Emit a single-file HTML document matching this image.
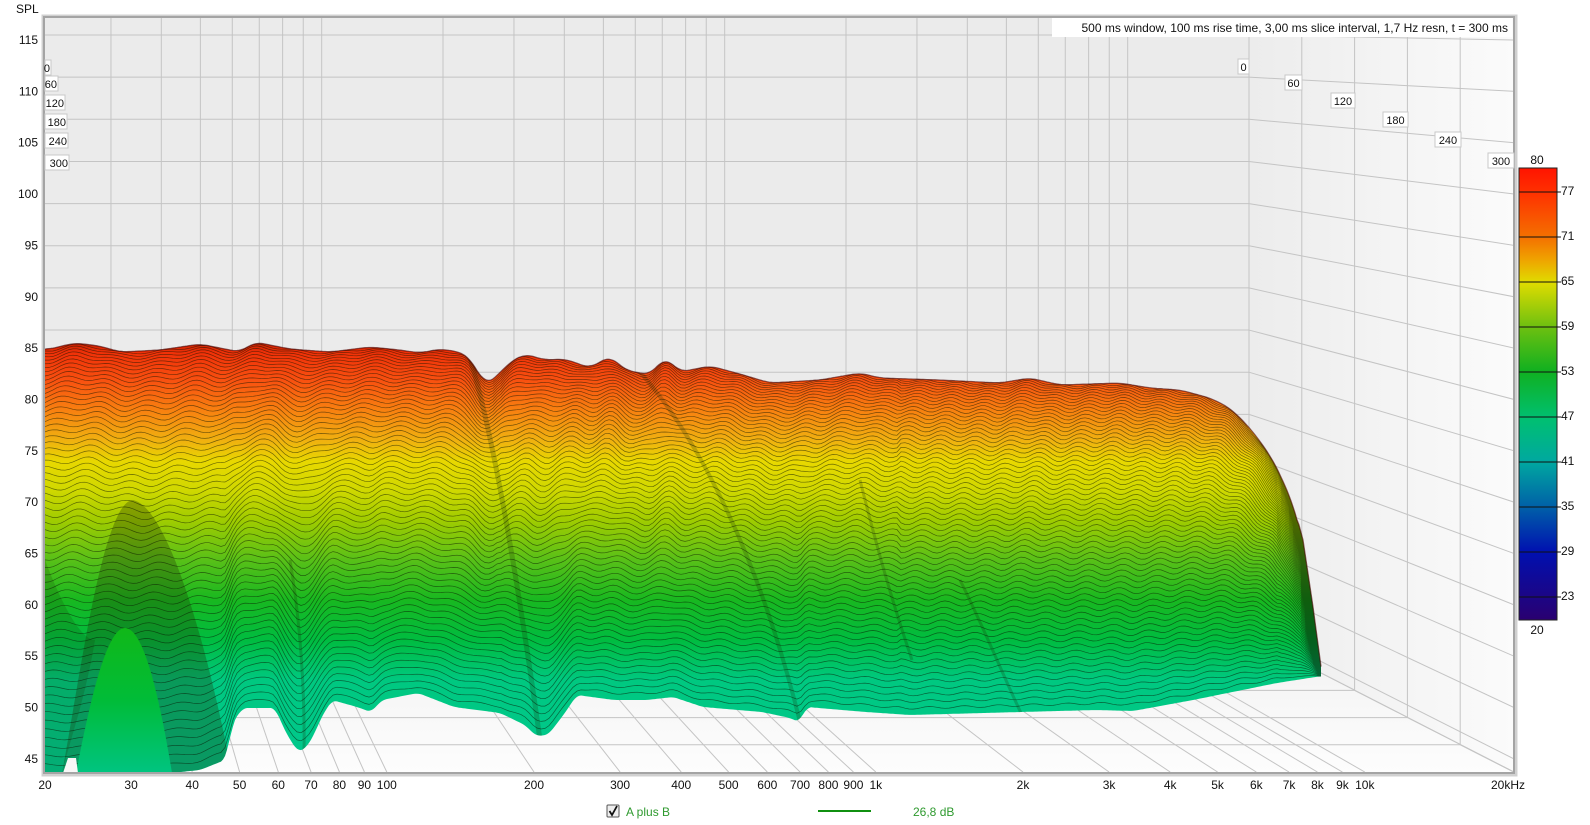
<!DOCTYPE html>
<html><head><meta charset="utf-8"><style>
html,body{margin:0;padding:0;background:#fff;width:1590px;height:825px;overflow:hidden}
svg{display:block}
text{font-family:"Liberation Sans",sans-serif;font-size:12px;fill:#111}
</style></head><body>
<svg id="s" width="1590" height="825" viewBox="0 0 1590 825" xmlns="http://www.w3.org/2000/svg">
<defs>
<linearGradient id="wall" x1="0" x2="1" y1="0" y2="0"><stop offset="0" stop-color="#ececec"/><stop offset="1" stop-color="#fbfbfb"/></linearGradient>
<linearGradient id="floor" x1="0" x2="0" y1="0" y2="1"><stop offset="0" stop-color="#f1f1f1"/><stop offset="1" stop-color="#fdfdfd"/></linearGradient>
<linearGradient id="surf" gradientUnits="userSpaceOnUse" x1="0" y1="340" x2="0" y2="775">
<stop offset="0" stop-color="#b81c00"/>
<stop offset="0.028" stop-color="#f03008"/>
<stop offset="0.092" stop-color="#f85010"/>
<stop offset="0.161" stop-color="#f88010"/>
<stop offset="0.23" stop-color="#f0b010"/>
<stop offset="0.28" stop-color="#e8d800"/>
<stop offset="0.345" stop-color="#d0d800"/>
<stop offset="0.414" stop-color="#a0cc00"/>
<stop offset="0.506" stop-color="#58c018"/>
<stop offset="0.598" stop-color="#18b820"/>
<stop offset="0.69" stop-color="#00bc40"/>
<stop offset="0.782" stop-color="#00c880"/>
<stop offset="1" stop-color="#00c890"/>
</linearGradient>
<linearGradient id="bell" x1="0" x2="0" y1="0" y2="1"><stop offset="0" stop-color="#10b818"/><stop offset="0.5" stop-color="#00bc38"/><stop offset="1" stop-color="#00c480"/></linearGradient>
<linearGradient id="cbar" x1="0" x2="0" y1="0" y2="1">
<stop offset="0" stop-color="#ff1400"/>
<stop offset="0.053" stop-color="#ff3000"/>
<stop offset="0.153" stop-color="#f47000"/>
<stop offset="0.2" stop-color="#f0a000"/>
<stop offset="0.253" stop-color="#e0dc00"/>
<stop offset="0.353" stop-color="#6cc010"/>
<stop offset="0.45" stop-color="#10b020"/>
<stop offset="0.553" stop-color="#00c070"/>
<stop offset="0.65" stop-color="#00a8a0"/>
<stop offset="0.75" stop-color="#0060a8"/>
<stop offset="0.85" stop-color="#0010b0"/>
<stop offset="1" stop-color="#2a0070"/>
</linearGradient>
<clipPath id="plot"><rect x="45" y="18" width="1468" height="754"/></clipPath>
</defs>
<rect x="0" y="0" width="1590" height="825" fill="#fff"/>
<rect x="43" y="16" width="1473" height="759" fill="none" stroke="#d0d0d0" stroke-width="3"/>
<g clip-path="url(#plot)">
<rect x="44" y="17" width="1470" height="756" fill="#ebebeb"/>
<polygon points="1249,17 1514,17 1514,772 1249,636" fill="url(#wall)"/>
<polygon points="44,636 1249,636 1514,772 44,772" fill="url(#floor)"/>
<g id="grid" stroke="#c4c4c4" stroke-width="1" fill="none"></g>
<g id="surfg"></g>
</g>
<rect x="44" y="17" width="1470" height="756" fill="none" stroke="#a4a4a4" stroke-width="2"/>
<rect x="1052" y="18" width="460" height="19" fill="#fff"/>
<text x="1508" y="32" text-anchor="end">500 ms window, 100 ms rise time, 3,00 ms slice interval, 1,7 Hz resn, t = 300 ms</text>
<text x="16" y="13">SPL</text>
<g id="ylab"></g>
<g id="xlab"></g>
<g id="tlab"></g>
<rect x="1519" y="168" width="38" height="452" fill="url(#cbar)" stroke="#222" stroke-width="1"/>
<g id="cb"></g>
<text x="1537" y="164" text-anchor="middle">80</text>
<text x="1537" y="634" text-anchor="middle">20</text>
<rect x="607" y="805" width="12" height="12" fill="#eee" stroke="#555" rx="1"/>
<path d="M609.5 811 L612 815 L617 806" stroke="#111" stroke-width="1.8" fill="none"/>
<text x="626" y="816" style="fill:#2f9a2f">A plus B</text>
<line x1="818" y1="811" x2="871" y2="811" stroke="#109010" stroke-width="2"/>
<text x="913" y="816" style="fill:#2f9a2f">26,8 dB</text>
</svg>
<script>
var NS="http://www.w3.org/2000/svg";
function el(p,n,a,t){var e=document.createElementNS(NS,n);for(var k in a)e.setAttribute(k,a[k]);if(t!=null)e.textContent=t;p.appendChild(e);return e;}
var L=Math.log10;
function xb(f){return 40+403*L(f/20);}
function xf(f){return 45+489*L(f/20);}
function ybk(d){return 35+(115-d)*8.43;}
function yfr(d){return 40+(115-d)*10.27;}
var grid=document.getElementById('grid');
var freqs=[30,40,50,60,70,80,90,100,200,300,400,500,600,700,800,900,1000,2000,3000,4000,5000,6000,7000,8000,9000,10000];
freqs.forEach(function(f){var x=xb(f);el(grid,'line',{x1:x,y1:17,x2:x,y2:636});el(grid,'line',{x1:x,y1:636,x2:xf(f),y2:772});});
el(grid,'line',{x1:1249,y1:17,x2:1249,y2:636});
for(var d=115;d>=45;d-=5){var y=ybk(d);el(grid,'line',{x1:44,y1:y,x2:1249,y2:y});el(grid,'line',{x1:1249,y1:y,x2:1514,y2:yfr(d)});}
el(grid,'line',{x1:44,y1:636,x2:1249,y2:636});
[1,2,3,4].forEach(function(k){var t=k/5;var x=1249+t*264,y=636+t*136;el(grid,'line',{x1:x,y1:17,x2:x,y2:y});el(grid,'line',{x1:44,y1:y,x2:x,y2:y});el(grid,'line',{x1:x,y1:y,x2:x+53,y2:y+27});});
el(grid,'line',{x1:1249,y1:636,x2:1514,y2:772});
var yl=document.getElementById('ylab');
for(var d=115;d>=45;d-=5){el(yl,'text',{x:38,y:yfr(d)+4,'text-anchor':'end'},d);}
var xl=document.getElementById('xlab');
[[20,'20'],[30,'30'],[40,'40'],[50,'50'],[60,'60'],[70,'70'],[80,'80'],[90,'90'],[100,'100'],[200,'200'],[300,'300'],[400,'400'],[500,'500'],[600,'600'],[700,'700'],[800,'800'],[900,'900'],[1000,'1k'],[2000,'2k'],[3000,'3k'],[4000,'4k'],[5000,'5k'],[6000,'6k'],[7000,'7k'],[8000,'8k'],[9000,'9k'],[10000,'10k']].forEach(function(a){el(xl,'text',{x:xf(a[0]),y:789,'text-anchor':'middle'},a[1]);});
el(xl,'text',{x:1491,y:789},'20kHz');
var tl=document.getElementById('tlab');
[[1238,59,11,'0'],[1285,75,17,'60'],[1331,93,24,'120'],[1383,112,25,'180'],[1435,132,26,'240'],[1488,153,26,'300']].forEach(function(a){el(tl,'rect',{x:a[0],y:a[1],width:a[2],height:15,fill:'#fff',stroke:'#c8c8c8'});el(tl,'text',{x:a[0]+a[2]/2,y:a[1]+12,'text-anchor':'middle','style':'font-size:11px'},a[3]);});
[[45,60,6,'0'],[45,76,13,'60'],[45,95,20,'120'],[45,114,22,'180'],[45,133,23,'240'],[45,155,24,'300']].forEach(function(a){el(tl,'rect',{x:a[0],y:a[1],width:a[2],height:15,fill:'#fff',stroke:'#c8c8c8'});el(tl,'text',{x:a[0]+a[2]-1,y:a[1]+12,'text-anchor':'end','style':'font-size:11px'},a[3]);});
var cb=document.getElementById('cb');
[[192,77],[237,71],[282,65],[327,59],[372,53],[417,47],[462,41],[507,35],[552,29],[597,23]].forEach(function(a){el(cb,'line',{x1:1519,y1:a[0],x2:1561,y2:a[0],stroke:'#111'});el(cb,'text',{x:1561,y:a[0]+3},a[1]);});
var T=[[45,350],[75,343],[100,346],[120,352],[160,350],[200,344],[240,352],[255,342],[290,349],[330,352],[370,347],[400,350],[420,353],[440,349],[460,352],[470,358],[478,372],[485,385],[495,378],[510,362],[525,354],[545,360],[565,359],[590,368],[610,356],[625,370],[650,375],[665,357],[680,372],[710,366],[740,374],[770,383],[820,380],[860,373],[880,378],[940,380],[1000,383],[1030,378],[1060,385],[1120,383],[1150,388],[1180,390],[1210,398],[1230,408],[1250,428],[1270,455],[1282,478],[1295,510],[1303,540],[1313,607],[1322,674]];
var B=[[45,773],[171,773],[200,770],[225,760],[229,745],[232,723],[243,708],[275,708],[286,733],[298,752],[306,748],[314,735],[321,718],[332,700],[357,707],[371,712],[382,700],[418,693],[454,707],[500,713],[525,725],[536,736],[548,735],[562,717],[577,695],[614,700],[647,700],[673,697],[703,707],[762,712],[790,718],[799,722],[807,707],[866,712],[910,715],[984,713],[1021,712],[1096,710],[1133,711],[1193,700],[1277,683],[1322,676]];
function interp(P,x){if(x<=P[0][0])return P[0][1];for(var i=1;i<P.length;i++){if(x<=P[i][0]){var a=P[i-1],b=P[i];return a[1]+(b[1]-a[1])*(x-a[0])/(b[0]-a[0]);}}return P[P.length-1][1];}
var X=[],TT=[],BB=[];
for(var x=45;x<=1322;x+=2){X.push(x);TT.push(interp(T,x));BB.push(interp(B,x));}
function smooth(a,w){var r=[];for(var i=0;i<a.length;i++){var s=0,n=0;for(var j=-w;j<=w;j++){var k=i+j;if(k>=0&&k<a.length){s+=a[k];n++;}}r.push(s/n);}return r;}
var n=X.length;var TS=smooth(TT,4);for(var i=n-12;i<n;i++)TS[i]=TT[i];
var BS=smooth(BB,2);
var topPts=X.map(function(x,i){return x+','+TS[i].toFixed(1);});
var botPts=X.map(function(x,i){return x+','+BS[i].toFixed(1);}).reverse();
var d='M'+topPts.join(' L')+' L'+botPts.join(' L')+' Z';
var sg=document.getElementById('surfg');
var defs=document.querySelector('defs');
var cp=el(defs,'clipPath',{id:'slab'});el(cp,'path',{d:d});
el(sg,'path',{d:d,fill:'url(#surf)'});
var g=el(sg,'g',{'clip-path':'url(#slab)'});
[['M468,352 C490,420 515,560 540,740',5],['M640,372 C700,440 760,560 800,722',4],['M860,480 C880,560 895,610 912,660',3],['M960,580 C985,630 1005,680 1021,713',3],['M290,560 C300,620 305,690 304,752',3]].forEach(function(a){el(g,'path',{d:a[0],stroke:'rgba(20,40,0,0.22)','stroke-width':a[1],fill:'none'});});
el(g,'path',{d:'M62,773 C78,690 102,505 132,500 C162,503 200,610 232,773 Z',fill:'rgba(30,45,0,0.30)'});
el(g,'path',{d:'M45,560 C60,600 80,640 95,640 C85,700 70,740 62,773 L45,773 Z',fill:'rgba(20,50,0,0.18)'});
var bellg=el(sg,'g',{'clip-path':'url(#slab)'});
var s='';var N=66;
for(var i=1;i<N;i++){var t=Math.pow(i/N,1.35);var A=1+6*Math.sqrt(t)*(1-t);var pts=[];
for(var k=0;k<n;k+=2){var x=X[k];var tp=TS[k],bt=BS[k];var per=x<500?7:(x<900?6:5.5);var y=tp+(bt-tp)*t+A*Math.sin(x/per+i*0.18)*(x>1280?0.3:1);pts.push(x+','+y.toFixed(1));}
s+='M'+pts.join(' L');}
el(g,'path',{d:s,stroke:'rgba(10,20,0,0.55)','stroke-width':0.7,fill:'none'});
el(bellg,'path',{d:'M76,773 C92,690 108,628 125,628 C144,628 160,700 172,773 Z',fill:'url(#bell)'});
el(bellg,'path',{d:'M63,773 L68,758 L76,758 L78,773 Z',fill:'#f7f7f7'});
el(sg,'path',{d:'M'+topPts.join(' L'),stroke:'rgba(70,0,0,0.6)','stroke-width':1.3,fill:'none'});
</script>
</body></html>
